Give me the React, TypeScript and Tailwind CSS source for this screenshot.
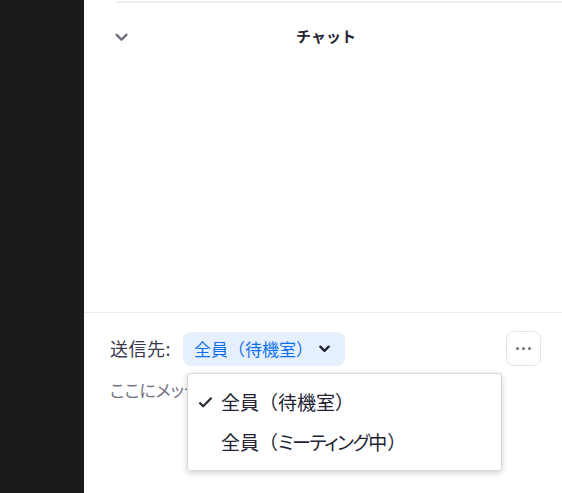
import React from 'react'

const jp = { fontFamily: '"Noto Sans CJK JP", "Noto Sans", sans-serif' }
const palt = { fontFeatureSettings: '"palt"' }

function Chevron({ className, strokeWidth = 2 }: { className?: string; strokeWidth?: number }) {
  return (
    <svg viewBox="0 0 12 8" className={className} fill="none">
      <polyline points="1.5,1.5 6,6 10.5,1.5" stroke="currentColor" strokeWidth={strokeWidth} strokeLinecap="round" strokeLinejoin="round" />
    </svg>
  )
}

export default function App() {
  return (
    <div className="flex w-[562px] h-[493px] overflow-hidden bg-white" style={jp}>
      {/* left dark strip */}
      <div className="w-[84px] shrink-0 bg-[#1b1b1b]" />

      {/* chat panel */}
      <div className="relative flex flex-1 flex-col">
        <div className="ml-[32px] mt-[1px] h-[2px] bg-[#efefef]" />

        {/* header */}
        <div className="relative flex h-[66px] items-center justify-center">
          <Chevron className="absolute left-[31px] top-[30px] w-[13px] h-[9px] text-[#6e6e7e]" strokeWidth={2.2} />
          <span className="text-[15px] font-bold text-[#232333] ml-[6px]">チャット</span>
        </div>

        {/* message area */}
        <div className="flex-1" />

        {/* composer */}
        <div className="h-[181px] border-t border-[#ececec] px-[26px] pt-[18px]">
          <div className="flex items-center">
            <span className="text-[18px] text-[#39394d] tracking-[0.5px]">送信先:</span>
            <div className="ml-[12px] flex h-[34px] items-center rounded-[8px] bg-[#e6f0fd] pl-[11px] pr-[15px]">
              <span className="text-[17px] text-[#0e71eb]">全員（待機室）</span>
              <Chevron className="ml-[6px] w-[11px] h-[8px] text-[#232333]" strokeWidth={2.6} />
            </div>
            <div className="ml-auto -mr-[5px] flex h-[35px] w-[35px] items-center justify-center rounded-[8px] border border-[#e2e2ea]">
              <span className="flex gap-[3px]">
                <span className="h-[3px] w-[3px] rounded-full bg-[#6e6e7e]" />
                <span className="h-[3px] w-[3px] rounded-full bg-[#6e6e7e]" />
                <span className="h-[3px] w-[3px] rounded-full bg-[#6e6e7e]" />
              </span>
            </div>
          </div>
          <div className="mt-[11px] text-[17px] text-[#747487]" style={palt}>ここにメッセージを入力します...</div>
        </div>

        {/* dropdown */}
        <div className="absolute left-[103px] top-[373px] w-[315px] h-[98px] rounded-[3px] border border-[#d9d9d9] bg-white shadow-[0_2px_6px_rgba(0,0,0,0.18)] pt-[12px]">
          <div className="flex h-[32px] items-center">
            <svg viewBox="0 0 16 12" className="ml-[10px] w-[15px] h-[12px] text-[#2b2b33]" fill="none">
              <polyline points="1.5,6.5 5.5,10.5 14.5,1.5" stroke="currentColor" strokeWidth="2.4" strokeLinejoin="round" />
            </svg>
            <span className="ml-[8px] text-[19px] text-[#232333]">全員（待機室）</span>
          </div>
          <div className="mt-[8px] flex h-[32px] items-center">
            <span className="ml-[33px] text-[19px] text-[#232333]">
              全員（<span className="tracking-[-1.5px]" style={palt}>ミーティング</span>中）
            </span>
          </div>
        </div>
      </div>
    </div>
  )
}
